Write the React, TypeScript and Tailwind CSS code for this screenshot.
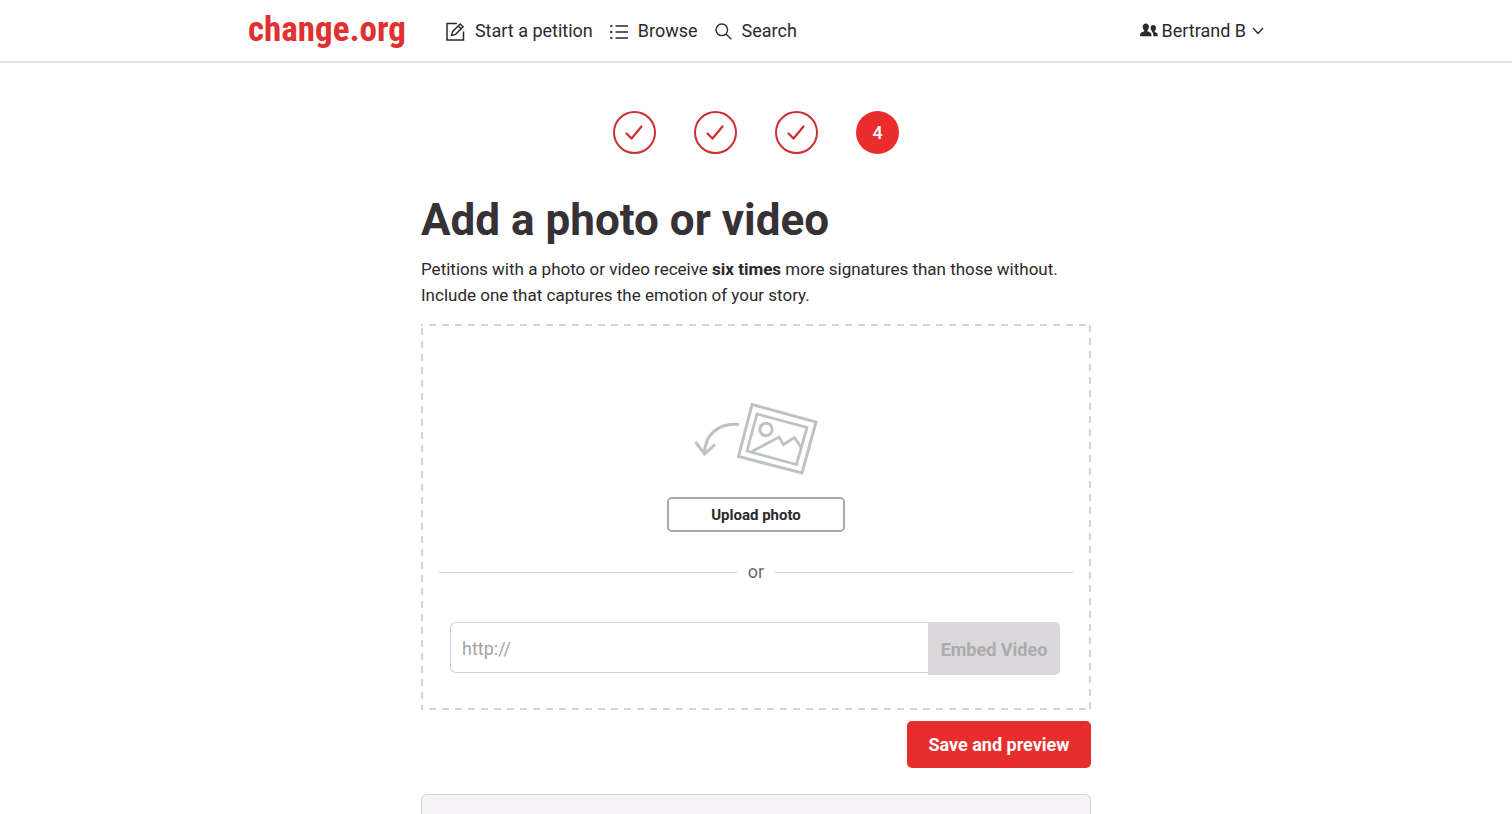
import React, { useState } from 'react';

interface NavItem {
  label: string;
  icon: React.ReactNode;
}

const EditIcon = () => (
  <svg width="19" height="19" viewBox="0 0 19 19" fill="none" stroke="currentColor" strokeWidth="1.5" className="mt-0.5">
    <path d="M11 1.500H1v16.500h16.500V9.500" />
    <path d="M5.500 13.500l1.200-4.100 7.500-7.500 2.900 2.900-7.500 7.500zM12.200 3.900l2.900 2.900" strokeWidth="1.400" />
  </svg>
);

const ListIcon = () => (
  <svg width="18" height="16" viewBox="0 0 18 16" fill="none" stroke="currentColor" strokeWidth="1.5" className="mt-0.5">
    <path d="M5.500 2H18M5.500 8H18M5.500 14H18" />
    <path d="M.3 2h2M.3 8h2M.3 14h2" strokeWidth="2" />
  </svg>
);

const SearchIcon = () => (
  <svg width="17" height="17" viewBox="0 0 17 17" fill="none" stroke="currentColor" strokeWidth="1.400" className="mt-0.5">
    <circle cx="6.800" cy="6.800" r="5.800" />
    <path d="M11 11l5.300 5.300" />
  </svg>
);

const PeopleIcon = () => (
  <svg width="18" height="14" viewBox="0 0 18 14" fill="currentColor" className="mb-0.5">
    <path d="M5.800.4C4 .4 2.700 1.800 2.700 3.800c0 1.500.7 2.900 1.600 3.600v.9L1.400 9.600C.5 10 .1 10.800.1 13.200h11.400c0-2.400-.4-3.200-1.300-3.600L7.300 8.300v-.9c.9-.7 1.600-2.100 1.600-3.600 0-2-1.300-3.400-3.100-3.400z" />
    <path d="M13.300 2c-1.500 0-2.700 1.200-2.700 2.900 0 1.200.5 2.300 1.300 2.900v.9c.9.600 1.500 1.800 1.500 4.500h4.300c0-2.300-.3-2.900-1.100-3.300l-1.900-1.100v-1c.8-.6 1.300-1.700 1.300-2.900 0-1.700-1.200-2.900-2.700-2.900z" />
  </svg>
);

const CheckIcon = () => (
  <svg width="19" height="16" viewBox="0 0 19 16" fill="none" stroke="currentColor" strokeWidth="2.200" strokeLinecap="round" strokeLinejoin="round">
    <path d="M1.500 8.500l5 5L16.500 1.500" />
  </svg>
);

const DropPhotoIcon = () => (
  <svg width="124" height="74" viewBox="0 0 124 74" fill="none" stroke="#bfc2c4" strokeWidth="3">
    <path d="M45 22.500C24 20.500 11 33 10.500 51M1.500 40l9 12L21 42.500" />
    <path d="M58 2.500l64 17.500-14 51L44.500 54.500z" />
    <path d="M63 12l50 13.500-10.500 37L53 49z" strokeWidth="2.800" />
    <circle cx="72" cy="27.500" r="6.200" />
    <path d="M58 49.500l27-14.500 4.500 7.500 11-7 7 10.500" strokeWidth="2.800" />
  </svg>
);

const navItems: NavItem[] = [
  { label: 'Start a petition', icon: <EditIcon /> },
  { label: 'Browse', icon: <ListIcon /> },
  { label: 'Search', icon: <SearchIcon /> },
];

const steps = [1, 2, 3, 4];
const currentStep = 4;

const Header = () => (
  <header className="border-b-2 border-[#e3e3e4]">
    <div className="max-w-[1016px] mx-auto h-[61px] flex items-center justify-between">
      <div className="flex items-center">
        <a href="#" className="pb-0.5 font-['Liberation_Sans_Narrow','Roboto_Condensed',Roboto,sans-serif] text-[35px] leading-8 font-bold text-[#e22f2f]">
          change.org
        </a>
        <nav className="ml-10 flex items-center gap-[17px]">
          {navItems.map(item => (
            <a key={item.label} href="#" className="flex items-center gap-2.5">
              {item.icon}
              <span>{item.label}</span>
            </a>
          ))}
        </nav>
      </div>
      <button type="button" className="flex items-center gap-1">
        <PeopleIcon />
        <span>Bertrand B</span>
        <svg width="12" height="8" viewBox="0 0 12 8" fill="none" stroke="currentColor" strokeWidth="1.5" className="ml-0.5">
          <path d="M1 1l5 5.500L11 1" />
        </svg>
      </button>
    </div>
  </header>
);

const App = () => {
  const [videoUrl, setVideoUrl] = useState('');

  return (
    <div className="min-h-screen flex flex-col bg-white font-[Roboto,sans-serif] text-lg leading-[26px] text-[#2b292c]">
      <Header />

      <main className="w-full max-w-[670px] mx-auto flex-1 flex flex-col">
        <ol className="mt-12 flex justify-center gap-[38px]">
          {steps.map(step => (
            <li
              key={step}
              className={
                step < currentStep
                  ? 'size-[43px] rounded-full border-2 border-[#cf2e30] text-[#cf2e30] flex items-center justify-center'
                  : 'size-[43px] rounded-full bg-[#ea2c2c] text-white font-medium flex items-center justify-center'
              }
            >
              {step < currentStep ? <CheckIcon /> : step}
            </li>
          ))}
        </ol>

        <h1 className="mt-10 text-[44px] leading-[52px] font-bold text-[#363135]">Add a photo or video</h1>
        <p className="mt-2.5 text-[17px]">
          Petitions with a photo or video receive <strong>six times</strong> more signatures than those without.
          <br />
          Include one that captures the emotion of your story.
        </p>

        <section className="relative mt-4 px-[18px] pt-[78px] pb-[35px]">
          {/* dashed drop zone outline, longer dashes than border-dashed gives */}
          <svg className="absolute inset-0 size-full pointer-events-none" aria-hidden="true">
            <rect width="100%" height="100%" fill="none" stroke="#d4d4d6" strokeWidth="4" strokeDasharray="7 6" strokeDashoffset="5" />
          </svg>

          <div className="flex flex-col items-center">
            <DropPhotoIcon />
            <button
              type="button"
              className="mt-[21px] w-[178px] h-[35px] border-2 border-[#a9a9aa] rounded-[5px] text-[15px] font-bold"
            >
              Upload photo
            </button>
          </div>

          <div className="mt-[27px] flex items-center gap-[11px] text-[#6b6b6d]">
            <span className="flex-1 h-px bg-[#d9d9da]" />
            or
            <span className="flex-1 h-px bg-[#d9d9da]" />
          </div>

          <form className="mt-[37px] pl-[11px] pr-[13px] flex items-start" onSubmit={e => e.preventDefault()}>
            <input
              type="text"
              aria-label="Video URL"
              placeholder="http://"
              value={videoUrl}
              onChange={e => setVideoUrl(e.target.value)}
              className="flex-1 min-w-0 h-[51px] px-[11px] pt-0.5 border border-r-0 border-[#d2d2d3] rounded-l-[6px] placeholder:text-[#a3a3a4] outline-none"
            />
            <button
              type="submit"
              disabled={!videoUrl}
              className="w-[132px] h-[53px] pt-0.5 rounded-r-[5px] bg-[#dad8db] text-[#acabad] font-bold"
            >
              Embed Video
            </button>
          </form>
        </section>

        <button
          type="button"
          className="mt-[11px] self-end w-[184px] h-[47px] rounded-[5px] bg-[#e82e2c] text-white font-bold"
        >
          Save and preview
        </button>

        <div className="mt-[26px] flex-1 border border-b-0 border-[#d9d6da] rounded-t-[6px] bg-[#f5f3f6]" />
      </main>
    </div>
  );
};

export default App;
